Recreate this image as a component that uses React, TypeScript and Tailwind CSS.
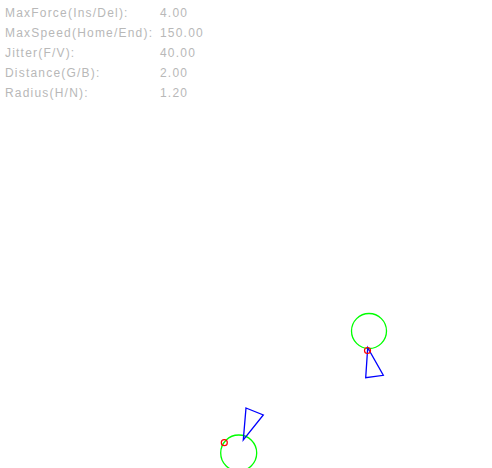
import React from "react";

const rows: [string, string][] = [
  ["MaxForce(Ins/Del):", "4.00"],
  ["MaxSpeed(Home/End):", "150.00"],
  ["Jitter(F/V):", "40.00"],
  ["Distance(G/B):", "2.00"],
  ["Radius(H/N):", "1.20"],
];

export default function App() {
  return (
    <div className="relative w-[492px] h-[468px] bg-white overflow-hidden">
      <div
        className="flex flex-col pt-[3px] pl-[5px] text-[12px] leading-[20px] tracking-[1.2px] text-[#b8b8b8]"
        style={{ fontFamily: '"Liberation Sans", Arial, sans-serif', WebkitFontSmoothing: "none" }}
      >
        {rows.map(([k, v]) => (
          <div key={k} className="flex">
            <span className="w-[155px]">{k}</span>
            <span>{v}</span>
          </div>
        ))}
      </div>
      <svg className="absolute left-0 top-0" width="492" height="468" viewBox="0 0 492 468">
        <circle cx="369" cy="331" r="17.5" fill="none" stroke="#00ff00" strokeWidth="1.3" />
        <polygon points="367.7,347.7 365.7,377.7 383.3,375.3" fill="none" stroke="#0000ff" strokeWidth="1.3" />
        <circle cx="367.5" cy="350.5" r="3" fill="none" stroke="#ff0000" strokeWidth="1.2" />

        <circle cx="238.7" cy="453" r="18" fill="none" stroke="#00ff00" strokeWidth="1.3" />
        <polygon points="246,408 263.3,415 243.3,440" fill="none" stroke="#0000ff" strokeWidth="1.3" />
        <circle cx="224.3" cy="442.7" r="3" fill="none" stroke="#ff0000" strokeWidth="1.2" />
      </svg>
    </div>
  );
}
